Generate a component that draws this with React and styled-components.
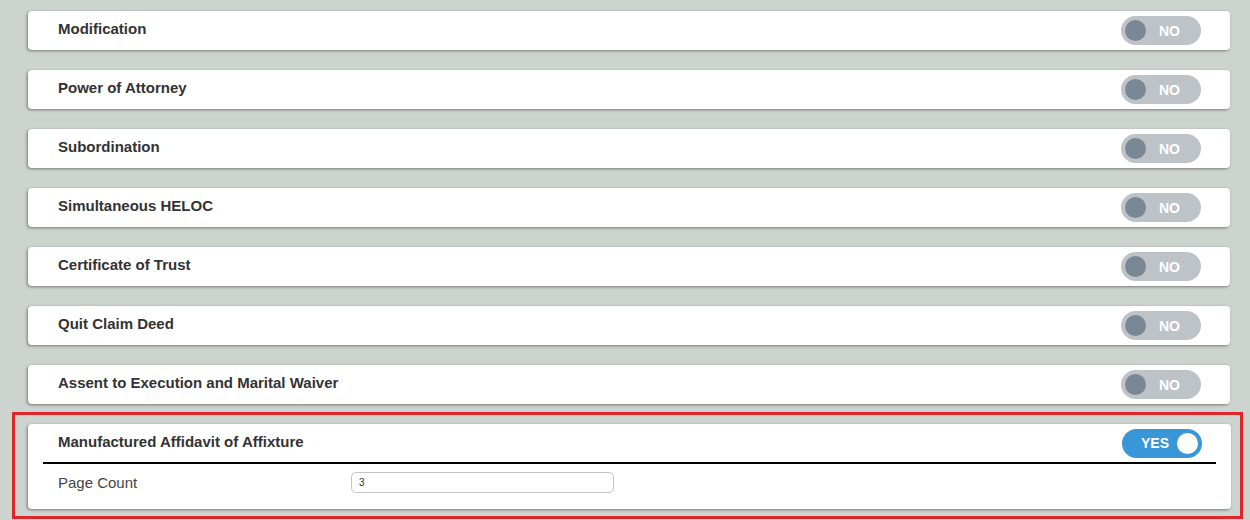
import React, { useState } from 'react';
import styled, { createGlobalStyle } from 'styled-components';

const GlobalStyle = createGlobalStyle`
  body {
    margin: 0;
    background-color: #cdd3ce;
    font-family: "Liberation Sans", Arial, sans-serif;
  }
`;

const Page = styled.div`
  padding: 11px 20px 0 28px;
  height: 520px;
  box-sizing: border-box;
  overflow: hidden;
`;

const List = styled.div`
  display: flex;
  flex-direction: column;
  gap: 20px;
`;

const Card = styled.div`
  background: #fff;
  border-radius: 4px;
  box-shadow: -1px 1px 3px rgba(0, 0, 0, 0.42);
`;

const Header = styled.div`
  display: flex;
  align-items: center;
  justify-content: space-between;
  height: ${p => (p.$open ? '38px' : '39px')};
  padding: 0 29px 0 30px;
`;

const Title = styled.div`
  font-size: 15px;
  font-weight: bold;
  color: #333;
  margin-top: -4px;
`;

const Track = styled.button`
  position: relative;
  width: 80px;
  height: 29px;
  border: none;
  border-radius: 15px;
  cursor: pointer;
  background: ${p => (p.$on ? '#3996d8' : '#bec3c8')};
  font-family: "Liberation Sans", Arial, sans-serif;
  font-size: 14px;
  font-weight: bold;
  color: #fff;
  display: flex;
  align-items: center;
  justify-content: ${p => (p.$on ? 'flex-start' : 'flex-end')};
  padding: ${p => (p.$on ? '0 0 0 19px' : '0 21px 0 0')};
`;

const Knob = styled.span`
  position: absolute;
  top: 4px;
  left: ${p => (p.$on ? '55px' : '4px')};
  width: 21px;
  height: 21px;
  border-radius: 50%;
  background: ${p => (p.$on ? '#fff' : '#7a8795')};
`;

const Highlight = styled.div`
  margin: 8px -13px 0 -16px;
  border: 3px solid #e1242a;
  padding: 9px 9px 7px 13px;
`;

const Divider = styled.div`
  height: 2px;
  background: #000;
  margin: 0 15px;
`;

const FieldRow = styled.div`
  display: flex;
  align-items: center;
  padding: 8px 0 16px 30px;
`;

const Label = styled.label`
  width: 293px;
  font-size: 15px;
  color: #444;
`;

const Input = styled.input`
  width: 263px;
  height: 21px;
  box-sizing: border-box;
  border: 1px solid #c4c4c4;
  border-radius: 5px;
  padding: 0 7px;
  font-family: "Liberation Sans", Arial, sans-serif;
  font-size: 10px;
  color: #333;
  outline: none;
`;

const Toggle = ({ on, onClick }) => (
  <Track $on={on} onClick={onClick}>
    {on ? 'YES' : 'NO'}
    <Knob $on={on} />
  </Track>
);

const items = [
  'Modification',
  'Power of Attorney',
  'Subordination',
  'Simultaneous HELOC',
  'Certificate of Trust',
  'Quit Claim Deed',
  'Assent to Execution and Marital Waiver',
];

export default function App() {
  const [values, setValues] = useState({});
  const [affidavit, setAffidavit] = useState(true);

  const flip = name => setValues(v => ({ ...v, [name]: !v[name] }));

  return (
    <Page>
      <GlobalStyle />
      <List>
        {items.map(name => (
          <Card key={name}>
            <Header>
              <Title>{name}</Title>
              <Toggle on={!!values[name]} onClick={() => flip(name)} />
            </Header>
          </Card>
        ))}
      </List>
      <Highlight>
        <Card>
          <Header $open>
            <Title>Manufactured Affidavit of Affixture</Title>
            <Toggle on={affidavit} onClick={() => setAffidavit(!affidavit)} />
          </Header>
          {affidavit && (
            <>
              <Divider />
              <FieldRow>
                <Label>Page Count</Label>
                <Input defaultValue="3" />
              </FieldRow>
            </>
          )}
        </Card>
      </Highlight>
    </Page>
  );
}
